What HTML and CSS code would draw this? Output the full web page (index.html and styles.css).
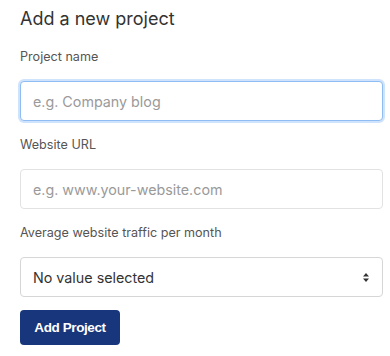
FILE: index.html
```html
<!DOCTYPE html>
<html lang="en">
<head>
  <meta charset="UTF-8" />
  <meta name="viewport" content="width=device-width, initial-scale=1" />
  <title>Add a new project</title>
  <link rel="stylesheet" href="styles.css">
</head>
<body>
  <form class="project-form">
    <h2 class="form-title">Add a new project</h2>

    <label class="field-label" for="project-name">Project name</label>
    <input class="field-input is-focused" id="project-name" placeholder="e.g. Company blog" />

    <label class="field-label" for="website-url">Website URL</label>
    <input class="field-input" id="website-url" placeholder="e.g. www.your-website.com" />

    <label class="field-label" for="traffic">Average website traffic per month</label>
    <div class="select-wrap">
      <select class="field-input field-select" id="traffic">
        <option>No value selected</option>
      </select>
      <svg class="select-arrow" width="6" height="9" viewBox="0 0 6 9">
        <path d="M3 0 L6 3.5 H0 Z M0 5.5 H6 L3 9 Z" fill="#333" />
      </svg>
    </div>

    <button class="submit-btn" type="button">Add Project</button>
  </form>
</body>
</html>
```

FILE: styles.css
```css
body {
  margin: 0;
  padding: 7px 7px 0 20px;
  background: #fff;
  font-family: Inter, "Noto Sans", sans-serif;
  color: #333;
}
.project-form {
  display: flex;
  flex-direction: column;
}
.form-title {
  margin: 0 0 16px;
  font-size: 18px;
  line-height: 24px;
  font-weight: 400;
  color: #333;
}
.field-label {
  font-size: 12.6px;
  line-height: 20px;
  color: #555;
  margin-bottom: 14px;
}
.field-input {
  box-sizing: border-box;
  height: 40px;
  width: 100%;
  margin: 0 0 14px;
  padding: 0 12px;
  border: 1px solid #e2e2e2;
  border-radius: 4px;
  font-family: Inter, "Noto Sans", sans-serif;
  font-size: 14.3px;
  color: #333;
  background: #fff;
  outline: none;
}
.field-input::placeholder {
  color: #9a9a9a;
}
.field-input.is-focused {
  border-color: #8fbcf2;
  box-shadow: 0 0 0 2px #cfe3fc;
}
.select-wrap {
  position: relative;
}
.field-select {
  appearance: none;
  -webkit-appearance: none;
  border-color: #d6d6d6;
  margin-bottom: 13px;
}
.select-arrow {
  position: absolute;
  right: 14px;
  top: 16px;
}
.submit-btn {
  align-self: flex-start;
  width: 100px;
  height: 35px;
  border: none;
  border-radius: 4px;
  background: #17367b;
  color: #fff;
  font-family: "Liberation Sans", Arial, sans-serif;
  font-weight: 700;
  font-size: 13.5px;
  letter-spacing: -0.4px;
  cursor: pointer;
}
```
